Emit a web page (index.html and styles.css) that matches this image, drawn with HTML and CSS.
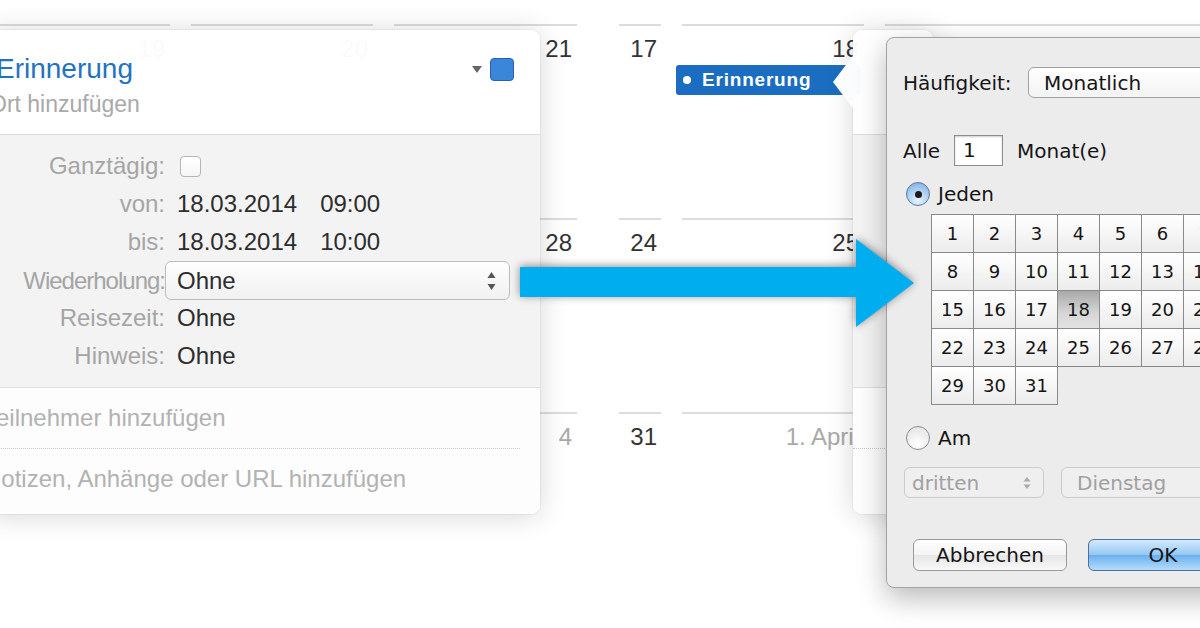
FILE: index.html
```html
<!DOCTYPE html>
<html lang="de">
  <head>
    <meta charset="utf-8">
    <title>Erinnerung wiederholen</title>
    <link rel="stylesheet" href="styles.css">
  </head>
  <body>
    <div class="stage">
      <!-- calendar in the background -->
      <div class="calendar">
        <div class="day"><div class="num">19</div></div>
        <div class="day"><div class="num">20</div></div>
        <div class="day"><div class="num">21</div></div>
        <div class="day day-narrow"><div class="num">17</div></div>
        <div class="day">
          <div class="num">18</div>
          <div class="event"><span class="event-dot"></span>Erinnerung</div>
        </div>
        <div class="day"></div>

        <div class="day"></div>
        <div class="day"></div>
        <div class="day"><div class="num">28</div></div>
        <div class="day day-narrow"><div class="num">24</div></div>
        <div class="day"><div class="num">25</div></div>
        <div class="day"></div>

        <div class="day"></div>
        <div class="day"></div>
        <div class="day day-muted"><div class="num">4</div></div>
        <div class="day day-narrow"><div class="num">31</div></div>
        <div class="day day-muted"><div class="num">1. April</div></div>
        <div class="day"></div>
      </div>

      <!-- event popover -->
      <div class="popover popover-main">
        <div class="pop-head">
          <div class="pop-title-row">
            <div class="pop-title">Erinnerung</div>
            <span class="tag-caret"></span>
            <span class="tag-color"></span>
          </div>
          <div class="pop-place">Ort hinzufügen</div>
        </div>
        <div class="pop-fields">
          <div class="field">
            <span class="field-label">Ganztägig:</span>
            <span class="field-value"><span class="checkbox"></span></span>
          </div>
          <div class="field">
            <span class="field-label">von:</span>
            <span class="field-value"><span>18.03.2014</span><span>09:00</span></span>
          </div>
          <div class="field">
            <span class="field-label">bis:</span>
            <span class="field-value"><span>18.03.2014</span><span>10:00</span></span>
          </div>
          <div class="field">
            <span class="field-label field-label-tight">Wiederholung:</span>
            <span class="select">
              <span>Ohne</span>
              <svg class="updown" width="9" height="20" viewBox="0 0 9 20">
                <path d="M4.5 1 L8.5 7 H0.5 Z" fill="#555"/>
                <path d="M4.5 19 L8.5 13 H0.5 Z" fill="#555"/>
              </svg>
            </span>
          </div>
          <div class="field">
            <span class="field-label">Reisezeit:</span>
            <span class="field-value">Ohne</span>
          </div>
          <div class="field">
            <span class="field-label">Hinweis:</span>
            <span class="field-value">Ohne</span>
          </div>
        </div>
        <div class="pop-foot">
          <div class="pop-link">Teilnehmer hinzufügen</div>
          <div class="pop-link">Notizen, Anhänge oder URL hinzufügen</div>
        </div>
      </div>

      <!-- second popover, mostly hidden behind the sheet -->
      <div class="popover popover-stub">
        <div class="pop-head"></div>
        <div class="pop-fields"></div>
        <div class="pop-foot">
          <div class="pop-link"></div>
          <div class="pop-link"></div>
        </div>
      </div>

      <!-- custom repeat sheet -->
      <div class="sheet">
        <div class="sheet-row">
          <span class="sheet-label">Häufigkeit:</span>
          <span class="popup popup-wide">Monatlich</span>
        </div>
        <div class="sheet-row sheet-every">
          <span class="every-label">Alle</span>
          <span class="number-box">1</span>
          <span class="every-unit">Monat(e)</span>
        </div>
        <div class="radio-row radio-first">
          <span class="radio radio-on"></span>
          <span class="radio-text">Jeden</span>
        </div>
        <div class="day-grid">
          <span>1</span><span>2</span><span>3</span><span>4</span><span>5</span><span>6</span><span>7</span>
          <span>8</span><span>9</span><span>10</span><span>11</span><span>12</span><span>13</span><span>14</span>
          <span>15</span><span>16</span><span>17</span><span class="picked">18</span><span>19</span><span>20</span><span>21</span>
          <span>22</span><span>23</span><span>24</span><span>25</span><span>26</span><span>27</span><span>28</span>
          <span>29</span><span>30</span><span>31</span>
        </div>
        <div class="radio-row radio-second">
          <span class="radio"></span>
          <span class="radio-text">Am</span>
        </div>
        <div class="sheet-row sheet-popups">
          <span class="popup popup-off popup-small">
            <span>dritten</span>
            <svg width="8" height="14" viewBox="0 0 8 14">
              <path d="M4 1 L7.5 5.5 H0.5 Z" fill="#aaa"/>
              <path d="M4 13 L7.5 8.5 H0.5 Z" fill="#aaa"/>
            </svg>
          </span>
          <span class="popup popup-off popup-wide">Dienstag</span>
        </div>
        <div class="sheet-row sheet-buttons">
          <span class="button">Abbrechen</span>
          <span class="button button-default">OK</span>
        </div>
      </div>

      <svg class="arrow" width="400" height="94" viewBox="0 0 400 94">
        <path d="M1 31 H337 V3 L395 47 L337 91 V61 H1 Z" fill="#00aeef"/>
      </svg>
    </div>
  </body>
</html>
```

FILE: styles.css
```css
body {
  margin: 0;
  background: #fff;
}

.stage {
  position: relative;
  width: 1200px;
  height: 628px;
  overflow: hidden;
  background: #fff;
  font-family: "Liberation Sans", Arial, sans-serif;
}

/* background calendar */

.calendar {
  display: grid;
  grid-template-columns: 170px 182px 183px 63px 182px 1fr;
  grid-auto-rows: 194px;
  column-gap: 21px;
  padding-top: 24px;
}

.day {
  border-top: 2px solid #dcdcdc;
  padding: 11px 5px 0 0;
  text-align: right;
  font-size: 24px;
  line-height: 24px;
  color: #333;
}

.day-narrow {
  margin-left: 21px;
  padding-right: 4px;
}

.day-muted {
  color: #a9a9a9;
}

.event {
  display: flex;
  align-items: center;
  gap: 11px;
  width: 185px;
  height: 30px;
  margin: 4px 0 0 -6px;
  padding-left: 7px;
  box-sizing: border-box;
  border-radius: 3px;
  background: #1b6dc1;
  color: #fff;
  font-size: 19px;
  font-weight: bold;
  letter-spacing: 0.8px;
  text-align: left;
}

.event-dot {
  width: 8px;
  height: 8px;
  border-radius: 50%;
  background: #fff;
}

/* popovers */

.popover {
  position: absolute;
  top: 30px;
  border-radius: 9px;
  box-shadow: 0 2px 28px rgba(0, 0, 0, 0.16), 0 0 0 1px rgba(0, 0, 0, 0.04);
}

.popover-main {
  left: -15px;
  width: 555px;
}

.popover-stub {
  left: 853px;
  width: 80px;
}

.popover-stub::before {
  content: "";
  position: absolute;
  left: -20px;
  top: 23px;
  width: 22px;
  height: 58px;
  background: #fbfcfd;
  clip-path: polygon(0 50%, 100% 0, 100% 100%);
}

.pop-head {
  height: 105px;
  box-sizing: border-box;
  border-bottom: 1px solid #dcdcdc;
  border-radius: 9px 9px 0 0;
  background: rgba(255, 255, 255, 0.975);
}

.pop-title-row {
  display: flex;
  align-items: center;
  gap: 8px;
  padding: 22px 26px 0 11px;
}

.pop-title {
  flex: 1;
  font-size: 28px;
  line-height: 34px;
  color: #1f73c1;
}

.tag-caret {
  width: 0;
  height: 0;
  border-left: 5px solid transparent;
  border-right: 5px solid transparent;
  border-top: 7px solid #666;
}

.tag-color {
  width: 24px;
  height: 23px;
  box-sizing: border-box;
  border: 1px solid #2f5db5;
  border-radius: 4px;
  background: #3a87da;
}

.pop-place {
  margin-top: 4px;
  padding-left: 4px;
  font-size: 23px;
  line-height: 28px;
  color: #a9a9a9;
}

.pop-fields {
  padding: 12px 30px 12px 0;
  border-bottom: 1px solid #dedede;
  background: #f3f3f3;
}

.popover-stub .pop-fields {
  height: 228px;
}

.field {
  display: grid;
  grid-template-columns: 180px 1fr;
  column-gap: 12px;
  align-items: center;
  height: 38px;
  font-size: 24px;
}

.field-label {
  text-align: right;
  color: #a5a5a5;
}

.field-label-tight {
  letter-spacing: -1px;
}

.field-value {
  display: flex;
  align-items: center;
  gap: 23px;
  color: #2d2d2d;
}

.checkbox {
  width: 21px;
  height: 21px;
  margin-left: 3px;
  box-sizing: border-box;
  border: 1px solid #b5b5b5;
  border-radius: 4px;
  background: linear-gradient(#fff, #f6f6f6);
}

.select {
  display: flex;
  align-items: center;
  justify-content: space-between;
  height: 39px;
  margin-left: -12px;
  padding: 0 13px 0 11px;
  box-sizing: border-box;
  border: 1px solid #bcbcbc;
  border-radius: 6px;
  background: linear-gradient(#fefefe, #f1f1f1);
  color: #2d2d2d;
}

.pop-foot {
  padding: 0 20px 5px 0;
  border-radius: 0 0 9px 9px;
  background: rgba(253, 253, 253, 0.985);
}

.pop-link {
  height: 60px;
  text-indent: -1px;
  font-size: 24px;
  line-height: 60px;
  color: #b2b2b2;
  white-space: nowrap;
}

.pop-link + .pop-link {
  border-top: 1px dotted #c8c8c8;
}

/* repeat sheet */

.sheet {
  position: absolute;
  left: 886px;
  top: 37px;
  width: 380px;
  padding: 29px 0 16px 16px;
  border: 1px solid #a3a3a3;
  border-radius: 8px;
  background: #ececec;
  box-shadow: 0 10px 28px rgba(0, 0, 0, 0.28);
  font-family: "DejaVu Sans", sans-serif;
  font-size: 20px;
  color: #151515;
}

.sheet-row {
  display: flex;
  align-items: center;
  height: 31px;
}

.sheet-label {
  width: 125px;
}

.popup {
  display: flex;
  align-items: center;
  justify-content: space-between;
  height: 31px;
  padding: 0 15px;
  box-sizing: border-box;
  border: 1px solid #a0a0a0;
  border-radius: 6px;
  background: linear-gradient(#fff, #f3f3f3);
}

.popup-wide {
  width: 200px;
}

.popup-off {
  border-color: #cbcbcb;
  background: #efefef;
  color: #a0a0a0;
}

.popup-small {
  width: 140px;
  margin: 0 17px 0 1px;
  padding: 0 12px 0 7px;
}

.sheet-every {
  margin-top: 37px;
}

.every-label {
  width: 51px;
}

.number-box {
  width: 49px;
  height: 31px;
  padding-left: 8px;
  box-sizing: border-box;
  border: 1px solid #8e8e8e;
  background: #fff;
  box-shadow: inset 0 1px 2px rgba(0, 0, 0, 0.2);
  line-height: 29px;
}

.every-unit {
  margin-left: 14px;
}

.radio-row {
  display: flex;
  align-items: center;
  height: 24px;
  padding-left: 3px;
}

.radio-first {
  margin-top: 16px;
}

.radio-second {
  margin-top: 21px;
}

.radio {
  display: grid;
  place-items: center;
  width: 24px;
  height: 24px;
  box-sizing: border-box;
  border: 1px solid #8d8d8d;
  border-radius: 50%;
  background: radial-gradient(circle at 50% 75%, #fff, #e0e0e0);
}

.radio-on {
  border-color: #5778a3;
  background: radial-gradient(circle at 50% 80%, #e6f3ff 0, #a9cdf0 55%, #7aa7d8 100%);
}

.radio-on::after {
  content: "";
  width: 7px;
  height: 7px;
  border-radius: 50%;
  background: #1a1a1a;
}

.radio-text {
  margin-left: 8px;
}

.day-grid {
  display: grid;
  grid-template-columns: repeat(7, 42px);
  grid-auto-rows: 38px;
  width: max-content;
  margin: 8px 0 0 28px;
  border-top: 1px solid #8a8a8a;
  border-left: 1px solid #8a8a8a;
  font-size: 18px;
}

.day-grid span {
  display: grid;
  place-items: center;
  box-sizing: border-box;
  border-right: 1px solid #8a8a8a;
  border-bottom: 1px solid #8a8a8a;
  background: linear-gradient(#fff, #ececec);
}

.day-grid .picked {
  background: linear-gradient(#a9a9a9, #d6d6d6 60%, #e2e2e2);
}

.sheet-popups {
  margin-top: 17px;
}

.sheet-buttons {
  height: 32px;
  margin-top: 41px;
  padding-left: 10px;
}

.button {
  display: grid;
  place-items: center;
  width: 154px;
  height: 32px;
  box-sizing: border-box;
  border: 1px solid #9a9a9a;
  border-radius: 6px;
  background: linear-gradient(#fff, #f3f3f3 50%, #e6e6e6 51%, #f8f8f8);
}

.button-default {
  width: 150px;
  margin-left: 21px;
  border-color: #4f6f9e;
  background: linear-gradient(#d4e9fc, #93c7f3 50%, #6cb0ef 51%, #b5dcfb);
}

.arrow {
  position: absolute;
  left: 519px;
  top: 236px;
  filter: drop-shadow(0 -1px 4px rgba(0, 0, 0, 0.45));
}
```
